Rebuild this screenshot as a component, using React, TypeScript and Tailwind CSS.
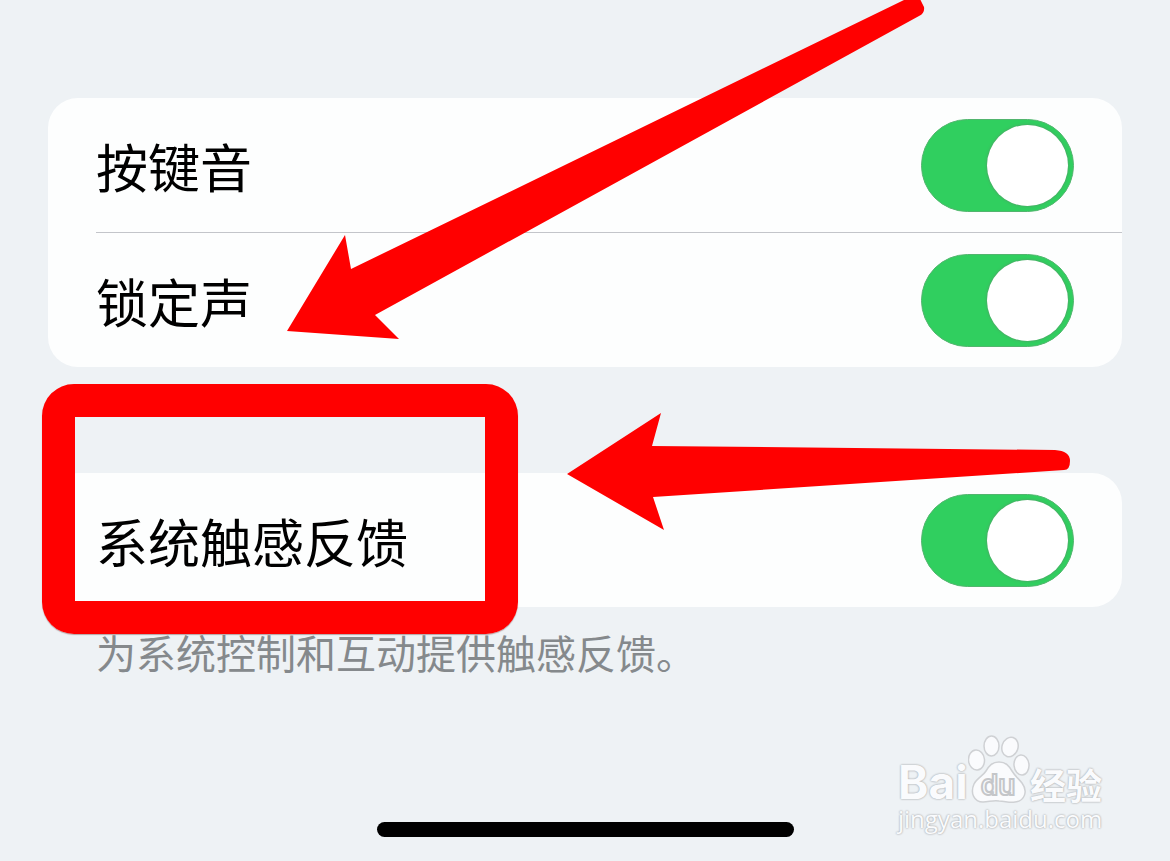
import { useState } from 'react'

const SOUND_ROWS = [
  { id: 'key-click', label: '按键音' },
  { id: 'lock-sound', label: '锁定声' },
]

function ToggleRow({ id, label }: { id: string; label: string }) {
  const [on, setOn] = useState(true)

  return (
    <div className="flex items-center justify-between px-12 pt-[21px] pb-5">
      <label htmlFor={id} className="text-[52px] leading-[60px] text-black">
        {label}
      </label>
      <input
        id={id}
        type="checkbox"
        role="switch"
        checked={on}
        onChange={(e) => setOn(e.target.checked)}
        className="flex h-[93px] w-[153px] shrink-0 cursor-pointer appearance-none items-center rounded-full border border-[#52b56e] bg-gray-300 px-[5px] before:h-[81px] before:w-[81px] before:rounded-full before:bg-white before:shadow-[0_0_3px_#5f8f6b] checked:justify-end checked:bg-[#30cf5f]"
      />
    </div>
  )
}

function Watermark() {
  return (
    <div className="pointer-events-none absolute right-[62px] bottom-7 flex w-[210px] flex-col text-[#fafbfd] [text-shadow:0_0_2px_#a9abae,0_0_2px_#bcbec0]">
      <div className="flex h-[70px] items-end">
        <span className="w-[70px] font-[Inter] text-[46px] leading-[46px] font-bold">Bai</span>
        <svg viewBox="0 0 62 70" className="h-[70px] w-[62px] shrink-0" fill="#fafbfd" stroke="#cfd1d4" strokeWidth="1.5">
          <ellipse cx="8.5" cy="25" rx="8" ry="10" transform="rotate(-5 8.5 25)" />
          <ellipse cx="23.5" cy="11" rx="7.5" ry="10" />
          <ellipse cx="42" cy="12" rx="8" ry="10" transform="rotate(18 42 12)" />
          <ellipse cx="53.5" cy="30" rx="7.5" ry="10" transform="rotate(-5 53.5 30)" />
          <path d="M31 27C24 27 21 31 18 36C15 41 9 43 6 49C2 58 6 67 15 67C21 67 25 65 31 66C37 66 41 68 47 67C57 66 60 56 54 48C50 43 47 41 44 36C41 31 38 27 31 27Z" />
          <text
            x="30"
            y="60"
            textAnchor="middle"
            className="font-[Inter] text-[28px] font-semibold [text-shadow:none]"
            stroke="#c4c6c9"
            strokeWidth="2"
          >
            du
          </text>
        </svg>
        <span className="text-[36px] leading-[42px] font-bold whitespace-nowrap">经验</span>
      </div>
      <span className="font-['Open_Sans'] text-2xl leading-7 whitespace-nowrap">jingyan.baidu.com</span>
    </div>
  )
}

export default function App() {
  return (
    <main className="relative flex min-h-screen flex-col overflow-hidden bg-[#eef2f5] px-12 pt-[98px] pb-6 font-['Noto_Sans_CJK_SC',sans-serif]">
      <section className="rounded-[30px] bg-[#fdfefe]">
        {SOUND_ROWS.map((row, i) => (
          <div key={row.id}>
            {i > 0 && <div className="ml-12 h-px bg-[#c3c5ca]" />}
            <ToggleRow id={row.id} label={row.label} />
          </div>
        ))}
      </section>

      <section className="relative mt-[106px] rounded-[30px] bg-[#fdfefe]">
        <ToggleRow id="haptics" label="系统触感反馈" />
        {/* Highlight frame */}
        <div className="pointer-events-none absolute -top-[89px] -left-[6px] h-[250px] w-[476px] rounded-[32px] border-[33px] border-[red] shadow-[0_1px_1px_#66333366]" />
      </section>
      <p className="mt-[17px] px-12 text-[40px] leading-[56px] text-[#85898c]">为系统控制和互动提供触感反馈。</p>

      {/* Arrows */}
      <svg viewBox="0 0 640 344" className="pointer-events-none absolute top-0 left-[287px] h-[344px] w-[640px]" fill="red">
        <path d="M0 331 58 235 64 269 617 0 624-4Q632-4 634 1L637 7Q638 13 632 16L88 315 112 339Z" />
      </svg>
      <svg viewBox="0 0 504 120" className="pointer-events-none absolute top-[412px] left-[567px] h-[120px] w-[504px]" fill="red">
        <path d="M0 62 94 1 85 34 488 38Q503 39 503 49Q503 58 497 58L86 85 97 118Z" />
      </svg>

      <Watermark />

      {/* Home indicator */}
      <div className="mx-auto mt-auto h-[15px] w-[417px] rounded-full bg-black" />
    </main>
  )
}
